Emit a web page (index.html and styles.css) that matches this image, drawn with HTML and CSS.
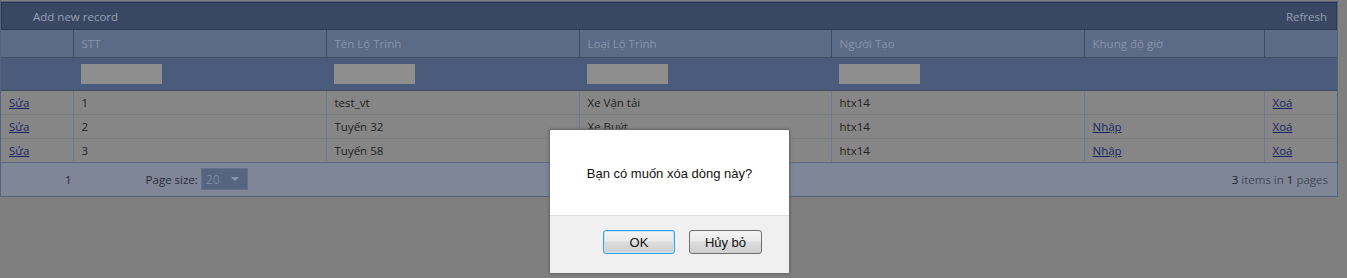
FILE: index.html
```html
<!DOCTYPE html>
<html lang="vi">
<head>
    <meta charset="UTF-8">
    <title>Lộ trình</title>
    <link rel="stylesheet" href="styles.css">
</head>
<body>
    <div class="grid">
        <div class="toolbar">
            <span>Add new record</span>
            <span>Refresh</span>
        </div>
        <table class="grid-table">
            <colgroup>
                <col style="width:72px">
                <col style="width:253px">
                <col style="width:253px">
                <col style="width:252px">
                <col style="width:253px">
                <col style="width:180px">
                <col>
            </colgroup>
            <thead>
                <tr class="head-row">
                    <th></th>
                    <th>STT</th>
                    <th>Tên Lộ Trình</th>
                    <th>Loại Lộ Trình</th>
                    <th>Người Tạo</th>
                    <th>Khung độ giờ</th>
                    <th></th>
                </tr>
                <tr class="filter-row">
                    <td></td>
                    <td><span class="filter-box"></span></td>
                    <td><span class="filter-box"></span></td>
                    <td><span class="filter-box"></span></td>
                    <td><span class="filter-box"></span></td>
                    <td></td>
                    <td></td>
                </tr>
            </thead>
            <tbody>
                <tr>
                    <td><a href="#">Sửa</a></td>
                    <td>1</td>
                    <td>test_vt</td>
                    <td>Xe Vận tải</td>
                    <td>htx14</td>
                    <td></td>
                    <td><a href="#">Xoá</a></td>
                </tr>
                <tr>
                    <td><a href="#">Sửa</a></td>
                    <td>2</td>
                    <td>Tuyến 32</td>
                    <td>Xe Buýt</td>
                    <td>htx14</td>
                    <td><a href="#">Nhập</a></td>
                    <td><a href="#">Xoá</a></td>
                </tr>
                <tr>
                    <td><a href="#">Sửa</a></td>
                    <td>3</td>
                    <td>Tuyến 58</td>
                    <td>Xe Buýt</td>
                    <td>htx14</td>
                    <td><a href="#">Nhập</a></td>
                    <td><a href="#">Xoá</a></td>
                </tr>
            </tbody>
        </table>
        <div class="pager">
            <span class="page-num">1</span>
            <span class="page-size">Page size:
                <span class="size-select">20 <span class="caret"></span></span>
            </span>
            <span class="pager-info"><b>3</b> items in <b>1</b> pages</span>
        </div>
    </div>

    <div class="dialog">
        <div class="dialog-msg">Bạn có muốn xóa dòng này?</div>
        <div class="dialog-actions">
            <button class="btn btn-ok">OK</button>
            <button class="btn">Hủy bỏ</button>
        </div>
    </div>
</body>
</html>
```

FILE: styles.css
```css
* {
    margin: 0;
    padding: 0;
    box-sizing: border-box;
}

body {
    background: #7f7f7f;
    font-family: 'Open Sans', 'Noto Sans', sans-serif;
    font-size: 11.5px;
    color: #222;
    padding-top: 1px;
    height: 278px;
    position: relative;
}

.grid {
    width: 1338px;
    border: 1px solid #56627c;
    background: #7f8698;
}

.toolbar {
    height: 28px;
    background: #3a4763;
    border: 1px solid #2e3850;
    display: flex;
    justify-content: space-between;
    align-items: center;
    padding: 0 9px 0 31px;
    color: #97a0b3;
}

.grid-table {
    width: 100%;
    border-collapse: collapse;
    table-layout: fixed;
}

.grid-table th {
    height: 27px;
    background: #5b6a86;
    color: #8a95aa;
    font-weight: normal;
    text-align: left;
    padding: 0 8px;
    border-left: 1px solid #3f4c66;
    border-bottom: 1px solid #3f4c66;
}

.grid-table th:first-child,
.grid-table td:first-child {
    border-left: none;
}

.filter-row td {
    height: 33px;
    background: #4a5b7b;
    padding: 0 8px;
    border-bottom: 1px solid #3f4c66;
}

.filter-box {
    display: block;
    width: 81px;
    height: 20px;
    background: #8e8e8e;
}

tbody td {
    height: 24px;
    background: #868686;
    padding: 0 8px;
    border-left: 1px solid #6f7990;
    border-bottom: 1px solid #7b7c80;
    white-space: nowrap;
}

tbody tr:last-child td {
    border-bottom: 1px solid #5e6a82;
}

a {
    color: #1b2563;
}

.pager {
    height: 33px;
    display: flex;
    align-items: center;
    padding: 0 9px 0 0;
    color: #2a2d36;
}

.page-num {
    padding-left: 64px;
}

.page-size {
    margin-left: 74px;
    display: flex;
    align-items: center;
    gap: 3px;
}

.size-select {
    width: 47px;
    height: 22px;
    background: #55647f;
    border: 1px solid #63708a;
    color: #7c889f;
    display: flex;
    align-items: center;
    justify-content: space-between;
    padding: 0 8px 0 4px;
    font-size: 12px;
}

.caret {
    width: 0;
    height: 0;
    border-left: 4px solid transparent;
    border-right: 4px solid transparent;
    border-top: 4px solid #8b96ab;
}

.pager-info {
    margin-left: auto;
    color: #454a57;
}

.pager-info b {
    font-weight: normal;
    color: #1d1f24;
}

.dialog {
    position: absolute;
    left: 549px;
    top: 129px;
    width: 241px;
    height: 145px;
    background: #fff;
    border: 1px solid #6b6b6b;
    border-radius: 2px;
    box-shadow: 0 0 3px rgba(0, 0, 0, 0.25);
    font-family: 'Liberation Sans', Arial, sans-serif;
    overflow: hidden;
}

.dialog-msg {
    height: 85px;
    display: flex;
    align-items: center;
    justify-content: center;
    font-size: 13px;
    color: #111;
    padding-top: 1px;
}

.dialog-actions {
    height: 58px;
    background: #f0f0f0;
    border-top: 1px solid #dfdfdf;
    display: flex;
    justify-content: flex-end;
    gap: 14px;
    padding: 14px 27px 0 0;
}

.btn {
    width: 73px;
    height: 24px;
    font-family: 'Liberation Sans', Arial, sans-serif;
    font-size: 13px;
    color: #111;
    background: linear-gradient(#f2f2f2 0%, #ebebeb 45%, #dddddd 50%, #cfcfcf 100%);
    border: 1px solid #707070;
    border-radius: 3px;
}

.btn-ok {
    width: 72px;
    border-color: #3c9edb;
    box-shadow: inset 0 0 0 1px #bfe6fb;
}
```
